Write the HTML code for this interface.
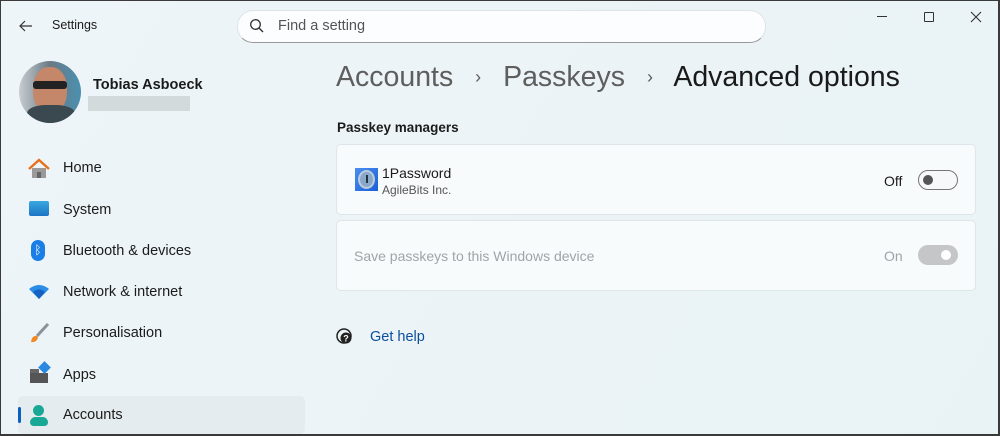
<!DOCTYPE html>
<html><head><style>
*{margin:0;padding:0;box-sizing:border-box}
body{width:1000px;height:436px;overflow:hidden;background:#edf4f8;font-family:"Liberation Sans",sans-serif;color:#1a1a1a;position:relative}
.frame{position:absolute;inset:0;border:1px solid #3a3a3a;border-right-width:2px;border-bottom-width:2px;background:linear-gradient(120deg,#eef5f9,#ebf3f6 60%,#e9f3f5)}
.abs{position:absolute}
.nav{position:absolute;left:62px;font-size:14.5px;color:#1b1b1b}
.card{position:absolute;left:335px;width:640px;background:#f8fbfc;border:1px solid #dfe6ea;border-radius:5px}
</style></head><body><div class="frame">
<svg class="abs" style="left:17px;top:17px" width="16" height="16" viewBox="0 0 16 16"><path d="M14 8H2M7 3L2 8l5 5" stroke="#333" stroke-width="1.2" fill="none"/></svg>
<div class="abs" style="left:51px;top:17px;font-size:12.5px">Settings</div>
<div class="abs" style="left:236px;top:9px;width:529px;height:33px;background:#fbfdfe;border:1px solid #dde3e6;border-bottom-color:#999;border-radius:16px"></div>
<svg class="abs" style="left:248px;top:17px" width="16" height="16" viewBox="0 0 16 16"><circle cx="6.5" cy="6.5" r="4.8" stroke="#333" stroke-width="1.3" fill="none"/><path d="M10 10l4 4" stroke="#333" stroke-width="1.4"/></svg>
<div class="abs" style="left:277px;top:17px;font-size:14.5px;color:#555">Find a setting</div>
<div class="abs" style="left:876px;top:15px;width:10px;height:1px;background:#333"></div>
<div class="abs" style="left:923px;top:11px;width:10px;height:10px;border:1px solid #333;border-radius:1px"></div>
<svg class="abs" style="left:969px;top:10px" width="12" height="12"><path d="M1 1l10 10M11 1L1 11" stroke="#333" stroke-width="1.1"/></svg>
<div class="abs" style="left:18px;top:60px;width:62px;height:62px;border-radius:50%;overflow:hidden;background:linear-gradient(90deg,#c8cdd0,#6a7a86 50%,#4a90b0)">
<div class="abs" style="left:14px;top:6px;width:34px;height:46px;border-radius:45%;background:#c4876a"></div>
<div class="abs" style="left:8px;top:44px;width:48px;height:20px;background:#3a4850;border-radius:40% 40% 0 0"></div>
<div class="abs" style="left:14px;top:20px;width:34px;height:8px;background:#222;border-radius:3px"></div>
</div>
<div class="abs" style="left:92px;top:76px;font-size:14.5px;font-weight:bold">Tobias Asboeck</div>
<div class="abs" style="left:87px;top:95px;width:102px;height:15px;background:#d3dadc"></div>
<svg class="abs" style="left:27px;top:157px" width="22" height="22" viewBox="0 0 22 22"><path d="M4 10v10h14V10" fill="#9a9a9a"/><path d="M9 20v-6h4v6" fill="#666"/><path d="M1 11L11 2l10 9" stroke="#e8701a" stroke-width="2.4" fill="none"/></svg>
<div class="abs" style="left:28px;top:200px;width:20px;height:15px;background:linear-gradient(#3aa8e0,#1c74c4);border-radius:2px"></div>
<div class="abs" style="left:30px;top:239px;width:14px;height:21px;background:#1a7ee6;border-radius:7px;color:#fff;font-size:12px;text-align:center;line-height:21px">ᛒ</div>
<svg class="abs" style="left:27px;top:283px" width="22" height="16" viewBox="0 0 22 16"><path d="M1 5Q11-3 21 5L11 15z" fill="#2a8ce6"/><path d="M5 8Q11 3 17 8L11 15z" fill="#1560c0"/></svg>
<svg class="abs" style="left:27px;top:321px" width="22" height="22"><path d="M20 2L9 14" stroke="#8a9399" stroke-width="3"/><path d="M3 20q1-7 6-6l1 2q-2 5-7 4z" fill="#f08a24"/></svg>
<div class="abs" style="left:29px;top:368px;width:9px;height:9px;background:#666"></div><div class="abs" style="left:29px;top:372px;width:18px;height:10px;background:#555"></div><div class="abs" style="left:39px;top:362px;width:9px;height:9px;background:#2a88e0;transform:rotate(45deg)"></div>
<div class="abs" style="left:17px;top:395px;width:287px;height:38px;background:#e4ecef;border-radius:5px"></div>
<div class="abs" style="left:17px;top:406px;width:3px;height:16px;background:#0a5fc0;border-radius:2px"></div>
<div class="abs" style="left:32px;top:404px;width:11px;height:11px;border-radius:50%;background:#1aa896"></div>
<div class="abs" style="left:29px;top:416px;width:18px;height:9px;border-radius:6px 6px 4px 4px;background:#1aa896"></div>
<div class="nav" style="top:159px">Home</div>
<div class="nav" style="top:201px">System</div>
<div class="nav" style="top:242px">Bluetooth &amp; devices</div>
<div class="nav" style="top:283px">Network &amp; internet</div>
<div class="nav" style="top:324px">Personalisation</div>
<div class="nav" style="top:366px">Apps</div>
<div class="nav" style="top:406px">Accounts</div>
<div class="abs" style="left:335px;top:60px;font-size:28.5px;color:#5e5e5e;white-space:nowrap">Accounts <span style="font-size:18px;margin:0 14px;position:relative;top:-3px">›</span> Passkeys <span style="font-size:18px;margin:0 14px;position:relative;top:-3px">›</span> <span style="color:#1a1a1a">Advanced options</span></div>
<div class="abs" style="left:336px;top:119px;font-size:13.5px;font-weight:bold;color:#1b1b1b">Passkey managers</div>
<div class="card" style="top:143px;height:71px"></div>
<div class="abs" style="left:354px;top:167px;width:23px;height:23px;background:linear-gradient(135deg,#4a8ef0,#1b5fd8)"></div>
<div class="abs" style="left:357px;top:169px;width:17px;height:19px;border-radius:50%;background:#8aa8c8;border:2px solid #bcd;"></div>
<div class="abs" style="left:365px;top:174px;width:2px;height:8px;background:#234"></div>
<div class="abs" style="left:381px;top:164px;font-size:14px">1Password</div>
<div class="abs" style="left:381px;top:182px;font-size:12px;color:#555">AgileBits Inc.</div>
<div class="abs" style="left:883px;top:172px;font-size:14px">Off</div>
<div class="abs" style="left:917px;top:169px;width:40px;height:20px;border:1px solid #777;border-radius:10px;background:#f6f8f9"></div>
<div class="abs" style="left:922px;top:174px;width:10px;height:10px;border-radius:50%;background:#555"></div>
<div class="card" style="top:219px;height:71px"></div>
<div class="abs" style="left:353px;top:247px;font-size:14px;color:#a0a4a6">Save passkeys to this Windows device</div>
<div class="abs" style="left:883px;top:247px;font-size:14px;color:#a0a4a6">On</div>
<div class="abs" style="left:917px;top:244px;width:40px;height:20px;border-radius:10px;background:#c4c6c7"></div>
<div class="abs" style="left:940px;top:249px;width:10px;height:10px;border-radius:50%;background:#fff"></div>
<svg class="abs" style="left:334px;top:326px" width="18" height="18"><circle cx="9" cy="9" r="7" fill="none" stroke="#222" stroke-width="1.5"/><circle cx="11" cy="11" r="5.5" fill="#222"/><text x="11" y="14.5" font-size="9" fill="#fff" text-anchor="middle" font-family="Liberation Sans" font-weight="bold">?</text></svg>
<div class="abs" style="left:369px;top:328px;font-size:14.5px;color:#0b4f9c">Get help</div>
</div></body></html>
